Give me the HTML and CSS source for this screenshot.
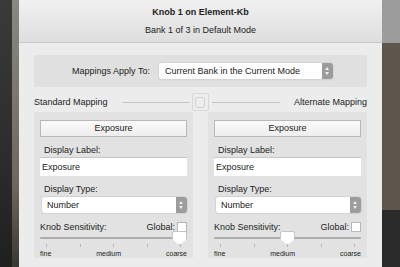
FILE: index.html
```html
<!DOCTYPE html>
<html lang="en">
<head>
    <meta charset="UTF-8">
    <title>Knob 1 on Element-Kb</title>
    <link rel="stylesheet" href="styles.css">
</head>
<body>
    <div class="screen">
        <div class="side-left">
            <div class="dark-strip"></div>
            <div class="light-strip"></div>
        </div>

        <div class="dialog">
            <div class="titlebar">
                <div class="title">Knob 1 on Element-Kb</div>
                <div class="subtitle">Bank 1 of 3 in Default Mode</div>
            </div>

            <div class="content">
                <div class="apply-box">
                    <span class="apply-label">Mappings Apply To:</span>
                    <div class="popup wide">
                        <span>Current Bank in the Current Mode</span>
                        <span class="stepper"></span>
                    </div>
                </div>

                <div class="mapping-head">
                    <span>Standard Mapping</span>
                    <span class="rule"></span>
                    <span class="switch"><span class="switch-dot"></span></span>
                    <span class="rule"></span>
                    <span>Alternate Mapping</span>
                </div>

                <div class="panels">
                    <div class="panel">
                        <div class="param-btn">Exposure</div>
                        <div class="field-label">Display Label:</div>
                        <div class="text-field">Exposure</div>
                        <div class="field-label">Display Type:</div>
                        <div class="popup">
                            <span>Number</span>
                            <span class="stepper"></span>
                        </div>
                        <div class="sens-row">
                            <span>Knob Sensitivity:</span>
                            <span class="global">Global: <span class="checkbox"></span></span>
                        </div>
                        <div class="slider">
                            <div class="track"></div>
                            <div class="thumb at-end"></div>
                        </div>
                        <div class="ticks">
                            <i></i><i></i><i></i><i></i><i></i>
                        </div>
                        <div class="scale">
                            <span>fine</span><span>medium</span><span>coarse</span>
                        </div>
                    </div>

                    <div class="panel">
                        <div class="param-btn">Exposure</div>
                        <div class="field-label">Display Label:</div>
                        <div class="text-field">Exposure</div>
                        <div class="field-label">Display Type:</div>
                        <div class="popup">
                            <span>Number</span>
                            <span class="stepper"></span>
                        </div>
                        <div class="sens-row">
                            <span>Knob Sensitivity:</span>
                            <span class="global">Global: <span class="checkbox"></span></span>
                        </div>
                        <div class="slider">
                            <div class="track"></div>
                            <div class="thumb at-middle"></div>
                        </div>
                        <div class="ticks">
                            <i></i><i></i><i></i><i></i><i></i>
                        </div>
                        <div class="scale">
                            <span>fine</span><span>medium</span><span>coarse</span>
                        </div>
                    </div>
                </div>
            </div>
        </div>

        <div class="side-right">
            <div class="r-top"></div>
            <div class="r-mid"></div>
            <div class="r-bottom"></div>
        </div>
    </div>
</body>
</html>
```

FILE: styles.css
```css
/* General */
body {
    margin: 0;
    padding: 0;
    font-family: "Liberation Sans", Arial, sans-serif;
    font-size: 9px;
    color: #222;
    background: #2c2c2c;
}

.screen {
    display: flex;
    width: 400px;
    height: 267px;
    overflow: hidden;
}

/* Background edges */
.side-left {
    display: flex;
    width: 19px;
}

.dark-strip {
    width: 12px;
    background: linear-gradient(to bottom, #3a3a3a, #2c2c2c 60%, #1f1f1f);
}

.light-strip {
    width: 7px;
    background: linear-gradient(to bottom, #8a8782, #6d665e 70%, #3a3632);
}

.side-right {
    display: flex;
    flex-direction: column;
    width: 18px;
}

.r-top {
    height: 43px;
    background: #9b9b9b;
}

.r-mid {
    height: 167px;
    background: #5e554d;
}

.r-bottom {
    flex: 1;
    background: #2a2a2a;
}

/* Dialog */
.dialog {
    width: 363px;
    background: #ececec;
}

.titlebar {
    height: 42px;
    border-bottom: 1px solid #c9c9c9;
    background: linear-gradient(to bottom, #f0f0f0, #dedede);
    text-align: center;
}

.title {
    padding-top: 7px;
    font-weight: bold;
    font-size: 9px;
}

.subtitle {
    margin-top: 8px;
}

.content {
    padding: 12px 15px 0;
}

.apply-box {
    display: flex;
    align-items: center;
    height: 32px;
    padding-left: 38px;
    background: #e0e0e0;
    border-radius: 2px;
}

.apply-label {
    width: 82px;
    margin-right: 5px;
}

/* Popup buttons */
.popup {
    display: flex;
    align-items: center;
    justify-content: space-between;
    height: 16px;
    padding-left: 6px;
    background: #fff;
    border-radius: 3px;
    box-shadow: 0 0 0 1px #d4d4d4, 0 1px 1px rgba(0, 0, 0, 0.12);
}

.popup.wide {
    width: 168px;
}

.stepper {
    width: 11px;
    height: 16px;
    border-radius: 0 3px 3px 0;
    background: #9c9c9c;
    position: relative;
}

.stepper::before,
.stepper::after {
    content: "";
    position: absolute;
    left: 3px;
    border-left: 2.5px solid transparent;
    border-right: 2.5px solid transparent;
}

.stepper::before {
    top: 4px;
    border-bottom: 3px solid #eee;
}

.stepper::after {
    bottom: 4px;
    border-top: 3px solid #eee;
}

/* Mapping header */
.mapping-head {
    display: flex;
    align-items: center;
    height: 20px;
    margin-top: 5px;
}

.rule {
    flex: 1;
    height: 1px;
    background: #c4c4c4;
}

.mapping-head .rule:nth-child(2) {
    margin: 0 2px 0 14px;
}

.mapping-head .rule:nth-child(4) {
    margin: 0 14px 0 3px;
}

.switch {
    display: flex;
    align-items: center;
    justify-content: center;
    width: 15px;
    height: 16px;
    border: 1px solid #d8d8d8;
    border-radius: 2px;
    background: #ededed;
}

.switch-dot {
    width: 8px;
    height: 9px;
    border: 1px solid #d0d0d0;
    border-radius: 3px;
}

/* Panels */
.panels {
    display: flex;
    gap: 15px;
}

.panel {
    width: 147px;
    height: 138px;
    padding: 8px 6px 0;
    background: #e2e2e2;
}

.param-btn {
    height: 15px;
    line-height: 15px;
    text-align: center;
    border: 1px solid #b8b8b8;
    background: linear-gradient(to bottom, #fafafa, #eeeeee);
}

.field-label {
    margin: 8px 0 1px 4px;
    line-height: 11px;
}

.text-field {
    height: 18px;
    line-height: 18px;
    padding-left: 2px;
    background: #fff;
    border-top: 1px solid #c6c6c6;
}

.panel .popup {
    margin-left: 2px;
    margin-top: 2px;
    padding-left: 5px;
}

.sens-row {
    display: flex;
    justify-content: space-between;
    align-items: center;
    margin-top: 8px;
    height: 11px;
}

.global {
    display: flex;
    align-items: center;
    gap: 2px;
}

.checkbox {
    width: 8px;
    height: 8px;
    border: 1px solid #b8b8b8;
    background: #fff;
}

/* Slider */
.slider {
    position: relative;
    height: 10px;
    margin-top: 1px;
}

.track {
    position: absolute;
    top: 4px;
    left: 0;
    right: 0;
    height: 2px;
    border-radius: 1px;
    background: #adadad;
}

.thumb {
    position: absolute;
    top: -2px;
    width: 13px;
    height: 12px;
    background: #fff;
    border: 1px solid #c4c4c4;
    border-radius: 2px 2px 0 0;
    clip-path: polygon(0 0, 100% 0, 100% 58%, 50% 100%, 0 58%);
}

.thumb.at-end {
    right: 0;
}

.thumb.at-middle {
    left: 66px;
}

.ticks {
    display: flex;
    justify-content: space-between;
    padding: 0 6px;
    height: 5px;
    margin-top: 1px;
}

.ticks i {
    width: 1px;
    height: 3px;
    background: #b4b4b4;
}

.scale {
    display: flex;
    justify-content: space-between;
    font-size: 7px;
    margin-top: 1px;
}
```
